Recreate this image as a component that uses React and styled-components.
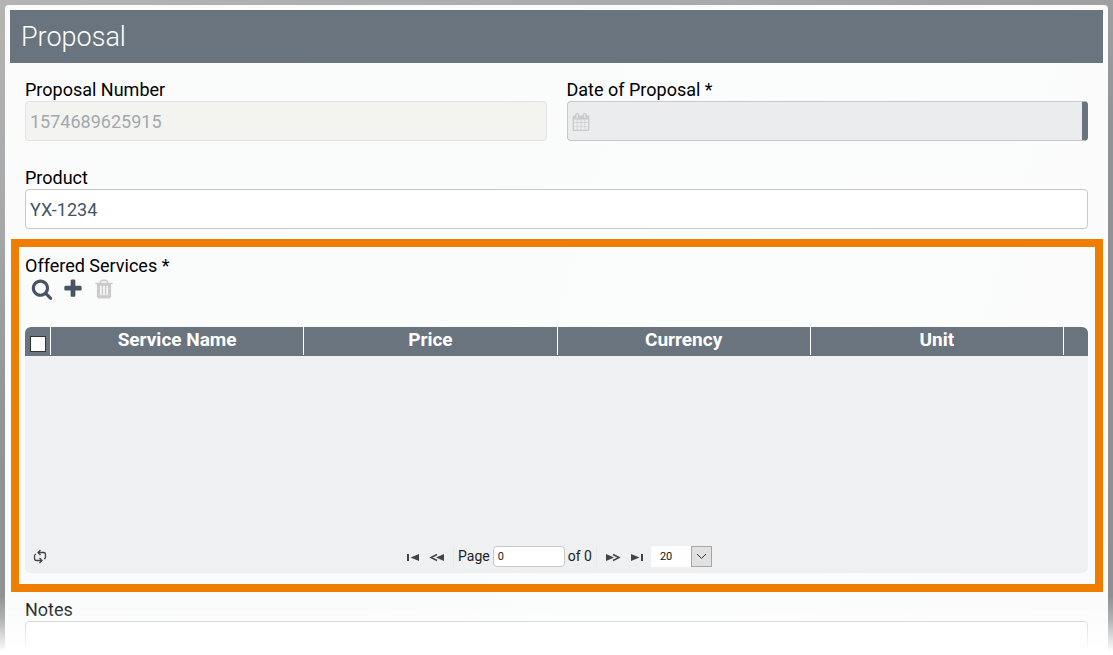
import React from "react";
import styled, { createGlobalStyle } from "styled-components";

const GlobalStyle = createGlobalStyle`
  * { box-sizing: border-box; }
  body {
    margin: 0;
    font-family: Roboto, "Liberation Sans", sans-serif;
    font-size: 18px;
    color: #000;
  }
`;

const Page = styled.div`
  height: 100vh;
  overflow: hidden;
  padding: 5px;
  background: linear-gradient(165deg, #b4b4b5 0%, #a9aaab 20%, #929397 45%, #8e8f93 100%);
`;

const Panel = styled.main`
  padding: 5px 5px 20px;
  border-radius: 4px;
  background: linear-gradient(105deg, #fbfbfb 0%, #fafbfb 40%, #fbfcfc 60%, #fbfbfb 100%);
`;

const Header = styled.header`
  height: 53px;
  padding: 0 11px;
  background: #6a747e;
`;

const Title = styled.h1`
  margin: 0;
  font-size: 27px;
  font-weight: 300;
  line-height: 54px;
  color: #fff;
`;

const Row = styled.div`
  display: grid;
  grid-template-columns: repeat(${(p) => p.$columns || 1}, minmax(0, 1fr));
  gap: 20px;
  padding: ${(p) => p.$top}px 15px 0;
`;

const Field = styled.div`
  display: flex;
  flex-direction: column;
`;

const Label = styled.label`
  line-height: 22px;
`;

const TextInput = styled.input`
  width: 100%;
  height: 40px;
  padding: 0 4px;
  border: 1px solid ${(p) => (p.disabled ? "#e3e4e2" : "#c8c8c8")};
  border-radius: 4px;
  background: ${(p) => (p.disabled ? "#f3f4ef" : "#fff")};
  color: ${(p) => (p.disabled ? "#a2a8b1" : "#465466")};
  font: inherit;
`;

const DateBox = styled.div`
  display: flex;
  align-items: center;
  height: 40px;
  padding: 2px 0 0 4px;
  border: 1px solid #c8c8c8;
  border-right: 6px solid #6a747e;
  border-radius: 4px;
  background: #ebecee;
  color: #cbcbcb;
`;

const DateInput = styled.input`
  flex: 1;
  min-width: 0;
  height: 100%;
  border: 0;
  background: transparent;
  color: #465466;
  font: inherit;
`;

const NotesInput = styled.textarea`
  width: 100%;
  height: 90px;
  padding: 4px;
  border: 1px solid #c8c8c8;
  border-radius: 4px;
  resize: none;
  font: inherit;
`;

const Highlight = styled.section`
  margin: 10px 0 0 1px;
  padding: 8px 7px 11px 6px;
  border: 8px solid #ef7d00;
`;

const SectionTitle = styled.h2`
  margin: 0;
  font-size: 18px;
  font-weight: 400;
  line-height: 22px;
`;

const Toolbar = styled.div`
  display: flex;
  gap: 8px;
  height: 50px;
  padding: 1px 6px 0;
`;

const ToolButton = styled.button`
  display: flex;
  width: 23px;
  height: 22px;
  padding: 0;
  border: 0;
  background: none;
  color: #465466;

  &:disabled { color: #cbcbcb; }
`;

const GridPanel = styled.div`
  overflow: hidden;
  border-radius: 6px;
  background: #eff0f2;
`;

const Table = styled.table`
  width: 100%;
  table-layout: fixed;
  border-collapse: separate;
  border-spacing: 0;
  background: #6a747e;
  color: #fff;
`;

const HeadCell = styled.th`
  width: ${(p) => p.$width || "auto"};
  height: 28px;
  padding: 0;
  border-right: ${(p) => (p.$last ? "0" : "1px solid #fff")};
  font-size: 19px;
  font-weight: 700;
  line-height: 25px;
  vertical-align: top;
`;

const SelectAll = styled.input`
  appearance: none;
  display: block;
  width: 16px;
  height: 16px;
  margin: 9px 0 0 5px;
  border: 1px solid #333;
  background: #fff;
`;

const HeadEdge = styled.div`
  height: 1px;
  background: #6a747e;
`;

const Rows = styled.div`
  height: 185px;
`;

const Pager = styled.div`
  display: grid;
  grid-template-columns: 1fr auto 1fr;
  align-items: center;
  height: 32px;
  padding-bottom: 1px;
`;

const PagerGroup = styled.div`
  display: flex;
  align-items: center;
  font-size: 14px;
  line-height: 21px;
  color: #222;
`;

const PagerButton = styled.button`
  display: flex;
  align-items: center;
  justify-content: center;
  width: 24px;
  height: 21px;
  padding: 0;
  border: 0;
  background: none;
  color: #444;
`;

const RefreshButton = styled(PagerButton)`
  margin-left: 3px;
`;

const Divider = styled.span`
  width: 1px;
  height: 21px;
  margin: 0 4px;
  background: #e8e9ea;
`;

const PageInput = styled.input`
  width: 72px;
  height: 21px;
  margin: 0 3px;
  padding: 0 4px;
  border: 1px solid #c8c8c8;
  border-radius: 4px;
  font-family: inherit;
  font-size: 11px;
  color: #222;
`;

const SizePicker = styled.div`
  display: grid;
  grid-template-columns: 40px 21px;
  height: 21px;
  margin-left: 2px;
  border-radius: 2px;
  background: #fff;
`;

const SizeSelect = styled.select`
  grid-area: 1 / 1 / 2 / 3;
  appearance: none;
  padding: 0 9px;
  border: 0;
  background: transparent;
  font-family: inherit;
  font-size: 11px;
  color: #111;
`;

const SizeArrow = styled.span`
  grid-area: 1 / 2 / 2 / 3;
  display: flex;
  align-items: center;
  justify-content: center;
  border: 1px solid #a6a6a6;
  background: #e1e1e1;
  pointer-events: none;
`;

const Fade = styled.div`
  position: fixed;
  inset: auto 0 0;
  height: 60px;
  background: linear-gradient(rgba(255, 255, 255, 0), rgba(255, 255, 255, 0.3) 40%, #fff 95%);
  pointer-events: none;
`;

const GLYPHS = {
  search:
    "M1216 832q0-185-131.500-316.500t-316.500-131.500-316.500 131.500-131.500 316.500 131.500 316.500 316.500 131.500 316.500-131.500 131.500-316.500zm512 832q0 52-38 90t-90 38q-54 0-90-38l-343-342q-179 124-399 124-143 0-273.500-55.500t-225-150-150-225-55.500-273.500 55.500-273.500 150-225 225-150 273.500-55.500 273.500 55.500 225 150 150 225 55.500 273.500q0 220-124 399l343 343q37 37 37 90z",
  plus:
    "M1600 736v192q0 40-28 68t-68 28h-416v416q0 40-28 68t-68 28h-192q-40 0-68-28t-28-68v-416h-416q-40 0-68-28t-28-68v-192q0-40 28-68t68-28h416v-416q0-40 28-68t68-28h192q40 0 68 28t28 68v416h416q40 0 68 28t28 68z",
  trash:
    "M704 1376v-704q0-14-9-23t-23-9h-64q-14 0-23 9t-9 23v704q0 14 9 23t23 9h64q14 0 23-9t9-23zm256 0v-704q0-14-9-23t-23-9h-64q-14 0-23 9t-9 23v704q0 14 9 23t23 9h64q14 0 23-9t9-23zm256 0v-704q0-14-9-23t-23-9h-64q-14 0-23 9t-9 23v704q0 14 9 23t23 9h64q14 0 23-9t9-23zm-544-992h448l-48-117q-7-9-17-11h-317q-10 2-17 11zm928 32v64q0 14-9 23t-23 9h-96v948q0 83-47 143.500t-113 60.500h-832q-66 0-113-58.500t-47-141.500v-952h-96q-14 0-23-9t-9-23v-64q0-14 9-23t23-9h309l70-167q15-37 54-63t79-26h320q40 0 79 26t54 63l70 167h309q14 0 23 9t9 23z",
  calendar:
    "M192 1664h288v-288h-288v288zm352 0h320v-288h-320v288zm-352-352h288v-320h-288v320zm352 0h320v-320h-320v320zm-352-384h288v-288h-288v288zm736 736h320v-288h-320v288zm-384-736h320v-288h-320v288zm768 736h288v-288h-288v288zm-384-352h320v-320h-320v320zm-352-864v-288q0-13-9.500-22.500t-22.500-9.500h-64q-13 0-22.500 9.500t-9.500 22.500v288q0 13 9.500 22.500t22.500 9.500h64q13 0 22.500-9.500t9.500-22.500zm736 864h288v-320h-288v320zm-384-384h320v-288h-320v288zm384 0h288v-288h-288v288zm32-480v-288q0-13-9.500-22.500t-22.500-9.500h-64q-13 0-22.500 9.500t-9.500 22.500v288q0 13 9.500 22.500t22.500 9.500h64q13 0 22.500-9.500t9.500-22.500zm384-64v1280q0 52-38 90t-90 38h-1408q-52 0-90-38t-38-90v-1280q0-52 38-90t90-38h128v-96q0-66 47-113t113-47h64q66 0 113 47t47 113v96h384v-96q0-66 47-113t113-47h64q66 0 113 47t47 113v96h128q52 0 90 38t38 90z",
};

function Glyph({ name, size }) {
  return (
    <svg width={size} height={size} viewBox="0 0 1792 1792" fill="currentColor" aria-hidden="true">
      <path d={GLYPHS[name]} />
    </svg>
  );
}

function ArrowIcon({ kind }) {
  const flipped = kind === "next" || kind === "last";
  const double = kind === "prev" || kind === "next";
  return (
    <svg width="16" height="11" viewBox="0 -1 16 11" fill="currentColor" aria-hidden="true">
      <g transform={flipped ? "translate(16 0) scale(-1 1)" : undefined}>
        {double ? (
          <>
            <path d="M15 2v7L7 5.500z" />
            <path d="M8 2.500L2 5.500l6 3" fill="none" stroke="currentColor" strokeWidth="1.500" />
          </>
        ) : (
          <path d="M2 2h2v7H2zM14 2v7L5.500 5.500z" />
        )}
      </g>
    </svg>
  );
}

function RefreshIcon() {
  return (
    <svg width="14" height="15" viewBox="0 0 14 15" fill="none" stroke="currentColor" strokeWidth="1.300" aria-hidden="true">
      <path d="M7.500 1L5 3.500L7.500 6M5 3.500H10.500Q12.500 3.500 12.500 5.500V8Q12.500 9.500 11 10" />
      <path d="M6.500 9L9 11.500L6.500 14M9 11.500H3.500Q1.500 11.500 1.500 9.500V7Q1.500 5.500 3 5" />
    </svg>
  );
}

const COLUMNS = ["Service Name", "Price", "Currency", "Unit"];

export default function App() {
  return (
    <>
      <GlobalStyle />
      <Page>
        <Panel>
          <Header>
            <Title>Proposal</Title>
          </Header>
          <Row $columns={2} $top={16}>
            <Field>
              <Label htmlFor="number">Proposal Number</Label>
              <TextInput id="number" defaultValue="1574689625915" disabled />
            </Field>
            <Field>
              <Label htmlFor="date">Date of Proposal *</Label>
              <DateBox>
                <Glyph name="calendar" size={18} />
                <DateInput id="date" />
              </DateBox>
            </Field>
          </Row>
          <Row $top={26}>
            <Field>
              <Label htmlFor="product">Product</Label>
              <TextInput id="product" defaultValue="YX-1234" />
            </Field>
          </Row>
          <Highlight aria-labelledby="services">
            <SectionTitle id="services">Offered Services *</SectionTitle>
            <Toolbar>
              <ToolButton aria-label="Search"><Glyph name="search" size={22} /></ToolButton>
              <ToolButton aria-label="Add"><Glyph name="plus" size={22} /></ToolButton>
              <ToolButton aria-label="Delete" disabled><Glyph name="trash" size={22} /></ToolButton>
            </Toolbar>
            <GridPanel>
              <Table>
                <thead>
                  <tr>
                    <HeadCell $width="26px">
                      <SelectAll type="checkbox" aria-label="Select all" />
                    </HeadCell>
                    {COLUMNS.map((name) => (
                      <HeadCell key={name} scope="col">{name}</HeadCell>
                    ))}
                    <HeadCell $width="24px" $last />
                  </tr>
                </thead>
              </Table>
              <HeadEdge />
              <Rows />
              <Pager>
                <RefreshButton aria-label="Refresh"><RefreshIcon /></RefreshButton>
                <PagerGroup>
                  <PagerButton aria-label="First page"><ArrowIcon kind="first" /></PagerButton>
                  <PagerButton aria-label="Previous page"><ArrowIcon kind="prev" /></PagerButton>
                  <Divider />
                  <label htmlFor="page">Page</label>
                  <PageInput id="page" defaultValue="0" />
                  <span>of 0</span>
                  <Divider />
                  <PagerButton aria-label="Next page"><ArrowIcon kind="next" /></PagerButton>
                  <PagerButton aria-label="Last page"><ArrowIcon kind="last" /></PagerButton>
                  <SizePicker>
                    <SizeSelect aria-label="Rows per page" defaultValue="20">
                      <option>20</option>
                      <option>50</option>
                      <option>100</option>
                    </SizeSelect>
                    <SizeArrow>
                      <svg width="11" height="7" viewBox="0 0 11 7" fill="none" stroke="#333" aria-hidden="true">
                        <path d="M1 1l4.500 4.500L10 1" />
                      </svg>
                    </SizeArrow>
                  </SizePicker>
                </PagerGroup>
              </Pager>
            </GridPanel>
          </Highlight>
          <Row $top={7}>
            <Field>
              <Label htmlFor="notes">Notes</Label>
              <NotesInput id="notes" />
            </Field>
          </Row>
        </Panel>
        <Fade />
      </Page>
    </>
  );
}
